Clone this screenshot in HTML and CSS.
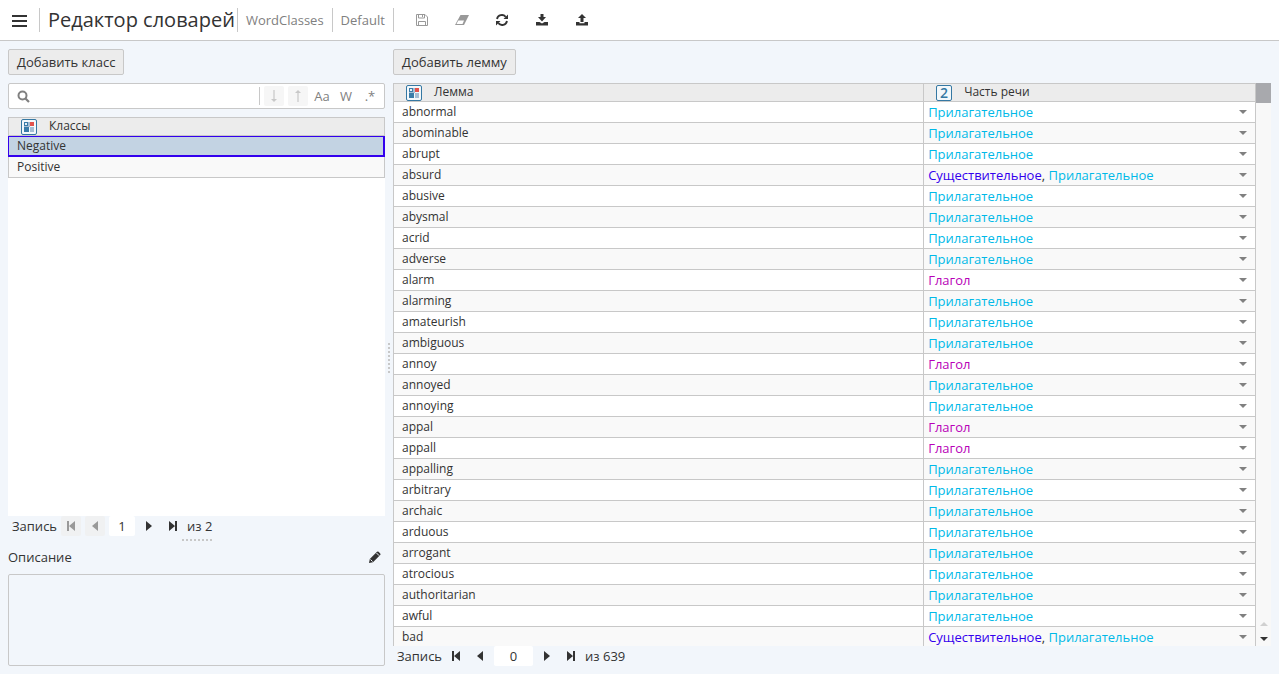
FILE: index.html
```html
<!DOCTYPE html>
<html lang="ru">
<head>
<meta charset="utf-8">
<title>Редактор словарей</title>
<link rel="stylesheet" href="styles.css">
</head>
<body>
<svg class="sprite" aria-hidden="true">
  <symbol id="classes" viewBox="0 0 16 16"><rect x=".5" y=".5" width="15" height="15" rx="1.5" fill="#f3f8fb" stroke="#3578a3"/><path d="M3 3h4v4H3z" fill="#3a7ca8"/><path d="M4 4h2v2H4z" fill="#e6f0f6"/><path d="M7 3h2v5H3V7h4z" fill="#a5bdd3"/><path d="M9 3h4v4H9z" fill="#e2524c"/><path d="M3 8h5v5H3z" fill="#3a7ca8"/><path d="M9 8h4v5H9z" fill="#a5bdd3"/></symbol>
  <symbol id="caret" viewBox="0 0 8 4"><path d="M0 0h8L4 4z"/></symbol>
  <symbol id="first" viewBox="0 0 10 10"><path d="M1 0h2v10H1zM9 0v10L3 5z"/></symbol>
  <symbol id="prev" viewBox="0 0 10 10"><path d="M8 0v10L2 5z"/></symbol>
  <symbol id="next" viewBox="0 0 10 10"><path d="M2 0v10l6-5z"/></symbol>
  <symbol id="last" viewBox="0 0 10 10"><path d="M7 0h2v10H7zM1 0v10l6-5z"/></symbol>
</svg>
<header class="topbar">
  <button class="menu" aria-label="Меню"><svg width="16" height="12" viewBox="0 0 16 12"><path d="M0 0h15v2H0zM0 5h15v2H0zM0 10h15v2H0z"/></svg></button>
  <h1 class="title">Редактор словарей</h1>
  <a class="crumb" href="#">WordClasses</a>
  <a class="crumb" href="#">Default</a>
  <nav class="tools" aria-label="Действия">
    <button class="tool" disabled aria-label="Сохранить"><svg class="line" width="12" height="12" viewBox="0 0 12 12"><path d="M.5.5h8.500l2.500 2.500v8.500H.5zM2.500.5v3.500h6V.5M2.500 11.500v-4h7v4M6.500 1v2"/></svg></button>
    <button class="tool" disabled aria-label="Очистить"><svg width="14" height="10" viewBox="0 0 14 10"><path d="M5.500 0H14L9 10H0z"/><path d="M3.300 5.500H9L7.500 9H1.500z" fill="#fff"/></svg></button>
    <button class="tool" aria-label="Обновить"><svg width="12" height="12" viewBox="0 0 12 12"><path d="M1 5a5 5 0 0 1 8.700-2.200M11 7a5 5 0 0 1-8.700 2.200" fill="none" stroke="currentColor" stroke-width="1.800"/><path d="M12 .5V5H7.500zM0 11.500V7h4.500z"/></svg></button>
    <button class="tool" aria-label="Импорт"><svg width="12" height="12" viewBox="0 0 12 12"><path d="M4.500 0h3v3H10L6 7.500 2 3h2.500zM0 8h3.500L6 9.500 8.500 8H12v3.500H0z"/></svg></button>
    <button class="tool" aria-label="Экспорт"><svg width="12" height="12" viewBox="0 0 12 12"><path d="M6 0l4 4H7.500v4h-3V4H2zM0 8h3.500v1.200h5V8H12v3.500H0z"/></svg></button>
  </nav>
</header>
<main class="workspace">
  <section class="pane pane-classes">
    <button class="add">Добавить класс</button>
    <div class="search">
      <svg class="lens" width="13" height="13" viewBox="0 0 13 13"><circle cx="5.500" cy="5.500" r="4" fill="none" stroke="currentColor" stroke-width="2"/><path d="M8.500 8.500l3.500 3.500" stroke="currentColor" stroke-width="2.200"/></svg>
      <input class="query" type="text" aria-label="Поиск">
      <span class="divider"></span>
      <button class="opt" disabled aria-label="Следующее"><svg width="6" height="12" viewBox="0 0 6 12"><path d="M2 0h2v9H2z" opacity=".6"/><path d="M0 9h6l-3 3z"/></svg></button>
      <button class="opt" disabled aria-label="Предыдущее"><svg width="6" height="12" viewBox="0 0 6 12"><path d="M2 3h2v9H2z" opacity=".6"/><path d="M0 3h6L3 0z"/></svg></button>
      <button class="opt">Aa</button>
      <button class="opt">W</button>
      <button class="opt">.*</button>
    </div>
    <div class="list">
      <table class="grid classes">
        <thead><tr><th><span class="head"><svg class="kind"><use href="#classes"/></svg>Классы</span></th></tr></thead>
        <tbody><tr class="selected"><td>Negative</td></tr><tr><td>Positive</td></tr></tbody>
      </table>
    </div>
    <div class="pager">
      <label for="class-no">Запись</label>
      <button class="step" disabled aria-label="Первая"><svg><use href="#first"/></svg></button>
      <button class="step" disabled aria-label="Предыдущая"><svg><use href="#prev"/></svg></button>
      <input class="number" id="class-no" value="1">
      <button class="step" aria-label="Следующая"><svg><use href="#next"/></svg></button>
      <button class="step" aria-label="Последняя"><svg><use href="#last"/></svg></button>
      <span class="total">из 2</span>
    </div>
    <div class="splitter-row"></div>
    <div class="caption">
      <label for="about">Описание</label>
      <button class="edit" aria-label="Изменить"><svg width="12" height="12" viewBox="0 0 12 12"><path d="M0 12l.8-4L8 .8Q8.800 0 9.600.8l1.600 1.600Q12 3.200 11.200 4L4 11.200z"/><path d="M1.500 8.500l2 2M7.500 2l2.700 2.700" stroke="#f2f6fb"/></svg></button>
    </div>
    <textarea class="about" id="about" readonly></textarea>
  </section>
  <div class="splitter"></div>
  <section class="pane pane-lemmas">
    <button class="add">Добавить лемму</button>
    <div class="sheet">
      <div class="viewport">
        <table class="grid lemmas">
          <colgroup><col class="col-lemma"><col></colgroup>
          <thead><tr><th><span class="head"><svg class="kind"><use href="#classes"/></svg>Лемма</span></th><th><span class="head"><span class="kind enum">2</span>Часть речи</span></th></tr></thead>
          <tbody>
            <tr><td>abnormal</td><td><button class="pos"><span class="adj">Прилагательное</span><svg><use href="#caret"/></svg></button></td></tr>
            <tr><td>abominable</td><td><button class="pos"><span class="adj">Прилагательное</span><svg><use href="#caret"/></svg></button></td></tr>
            <tr><td>abrupt</td><td><button class="pos"><span class="adj">Прилагательное</span><svg><use href="#caret"/></svg></button></td></tr>
            <tr><td>absurd</td><td><button class="pos"><span><span class="noun">Существительное</span>, <span class="adj">Прилагательное</span></span><svg><use href="#caret"/></svg></button></td></tr>
            <tr><td>abusive</td><td><button class="pos"><span class="adj">Прилагательное</span><svg><use href="#caret"/></svg></button></td></tr>
            <tr><td>abysmal</td><td><button class="pos"><span class="adj">Прилагательное</span><svg><use href="#caret"/></svg></button></td></tr>
            <tr><td>acrid</td><td><button class="pos"><span class="adj">Прилагательное</span><svg><use href="#caret"/></svg></button></td></tr>
            <tr><td>adverse</td><td><button class="pos"><span class="adj">Прилагательное</span><svg><use href="#caret"/></svg></button></td></tr>
            <tr><td>alarm</td><td><button class="pos"><span class="verb">Глагол</span><svg><use href="#caret"/></svg></button></td></tr>
            <tr><td>alarming</td><td><button class="pos"><span class="adj">Прилагательное</span><svg><use href="#caret"/></svg></button></td></tr>
            <tr><td>amateurish</td><td><button class="pos"><span class="adj">Прилагательное</span><svg><use href="#caret"/></svg></button></td></tr>
            <tr><td>ambiguous</td><td><button class="pos"><span class="adj">Прилагательное</span><svg><use href="#caret"/></svg></button></td></tr>
            <tr><td>annoy</td><td><button class="pos"><span class="verb">Глагол</span><svg><use href="#caret"/></svg></button></td></tr>
            <tr><td>annoyed</td><td><button class="pos"><span class="adj">Прилагательное</span><svg><use href="#caret"/></svg></button></td></tr>
            <tr><td>annoying</td><td><button class="pos"><span class="adj">Прилагательное</span><svg><use href="#caret"/></svg></button></td></tr>
            <tr><td>appal</td><td><button class="pos"><span class="verb">Глагол</span><svg><use href="#caret"/></svg></button></td></tr>
            <tr><td>appall</td><td><button class="pos"><span class="verb">Глагол</span><svg><use href="#caret"/></svg></button></td></tr>
            <tr><td>appalling</td><td><button class="pos"><span class="adj">Прилагательное</span><svg><use href="#caret"/></svg></button></td></tr>
            <tr><td>arbitrary</td><td><button class="pos"><span class="adj">Прилагательное</span><svg><use href="#caret"/></svg></button></td></tr>
            <tr><td>archaic</td><td><button class="pos"><span class="adj">Прилагательное</span><svg><use href="#caret"/></svg></button></td></tr>
            <tr><td>arduous</td><td><button class="pos"><span class="adj">Прилагательное</span><svg><use href="#caret"/></svg></button></td></tr>
            <tr><td>arrogant</td><td><button class="pos"><span class="adj">Прилагательное</span><svg><use href="#caret"/></svg></button></td></tr>
            <tr><td>atrocious</td><td><button class="pos"><span class="adj">Прилагательное</span><svg><use href="#caret"/></svg></button></td></tr>
            <tr><td>authoritarian</td><td><button class="pos"><span class="adj">Прилагательное</span><svg><use href="#caret"/></svg></button></td></tr>
            <tr><td>awful</td><td><button class="pos"><span class="adj">Прилагательное</span><svg><use href="#caret"/></svg></button></td></tr>
            <tr><td>bad</td><td><button class="pos"><span><span class="noun">Существительное</span>, <span class="adj">Прилагательное</span></span><svg><use href="#caret"/></svg></button></td></tr>
          </tbody>
        </table>
      </div>
      <div class="scrollbar">
        <div class="thumb"></div>
        <button class="arrow up" disabled aria-label="Вверх"><svg><use href="#caret"/></svg></button>
        <button class="arrow" aria-label="Вниз"><svg><use href="#caret"/></svg></button>
      </div>
    </div>
    <div class="pager">
      <label for="lemma-no">Запись</label>
      <button class="step" aria-label="Первая"><svg><use href="#first"/></svg></button>
      <button class="step" aria-label="Предыдущая"><svg><use href="#prev"/></svg></button>
      <input class="number wide" id="lemma-no" value="0">
      <button class="step" aria-label="Следующая"><svg><use href="#next"/></svg></button>
      <button class="step" aria-label="Последняя"><svg><use href="#last"/></svg></button>
      <span class="total">из 639</span>
    </div>
  </section>
</main>
</body>
</html>
```
FILE: styles.css
```css
* { box-sizing: border-box; }
body {
  margin: 0;
  height: 100vh;
  display: flex;
  flex-direction: column;
  overflow: hidden;
  background: #f2f6fb;
  color: #333;
  font: 13px/20px "Open Sans", sans-serif;
}
button, input, textarea { font: inherit; color: inherit; }
button { margin: 0; padding: 0; border: 0; background: none; }
svg { display: block; flex: none; fill: currentColor; }
.line { fill: none; stroke: currentColor; }
.sprite { position: absolute; width: 0; height: 0; }

.topbar {
  flex: none;
  height: 41px;
  display: flex;
  align-items: center;
  background: #fff;
  border-bottom: 1px solid #c8c8c8;
}
.menu { height: 24px; padding: 2px 11px 0 12px; border-right: 1px solid #c8c8c8; }
.title { margin: 0; padding: 0 2px 0 8px; font-size: 20px; line-height: 24px; font-weight: 400; border-right: 1px solid #c8c8c8; }
.crumb { height: 24px; line-height: 24px; padding: 0 8px; color: #808080; text-decoration: none; border-right: 1px solid #c8c8c8; }
.tools { display: flex; padding-left: 8px; }
.tool { width: 40px; height: 24px; display: flex; align-items: center; justify-content: center; }
.tool:disabled { color: #999; }

.workspace { flex: 1; min-height: 0; display: flex; padding: 8px; }
.pane { display: flex; flex-direction: column; min-width: 0; }
.pane-classes { flex: 0 0 377px; }
.pane-lemmas { flex: 1; }
.splitter { flex: none; width: 8px; display: flex; align-items: center; justify-content: center; }
.splitter::before { content: ""; width: 2px; height: 30px; background: repeating-linear-gradient(#c8c8c8 0 2px, transparent 2px 4px); }
.add {
  flex: none;
  align-self: flex-start;
  height: 26px;
  padding: 0 8px;
  margin-bottom: 8px;
  border: 1px solid #c8c8c8;
  border-radius: 2px;
  background: #ececec;
}

.search { flex: none; height: 26px; display: flex; align-items: center; gap: 4px; padding: 0 4px 0 8px; margin-bottom: 8px; border: 1px solid #c8c8c8; border-radius: 2px; background: #fff; }
.lens { color: #808080; }
.query { flex: 1; min-width: 0; height: 20px; border: 0; outline: 0; background: none; }
.divider { width: 1px; height: 18px; background: #c8c8c8; }
.opt { width: 20px; height: 20px; display: flex; align-items: center; justify-content: center; color: #808080; border-radius: 2px; }
.opt:disabled { background: #f6f6f6; color: #c8c8c8; }

.list { flex: 1; min-height: 0; background: #fff; overflow: hidden; }
.grid { width: 100%; border-collapse: separate; border-spacing: 0; table-layout: fixed; border-top: 1px solid #c8c8c8; border-left: 1px solid #c8c8c8; font-size: 12px; }
.grid th, .grid td { padding: 0; border-right: 1px solid #c8c8c8; border-bottom: 1px solid #c8c8c8; text-align: left; font-weight: 400; }
.grid th { height: 18px; background: #ececec; }
.grid td { height: 21px; line-height: 20px; padding: 0 8px; background: #fff; }
.grid tr:nth-child(even) td { background: #f9f9f9; }
.head { display: flex; gap: 12px; height: 17px; line-height: 16px; padding-left: 12px; }
.kind { width: 16px; height: 16px; margin-top: 1px; flex: none; }
.enum { border: 1px solid #3578a3; border-radius: 2px; background: #f3f8fb; color: #3578a3; font-size: 14px; font-weight: 600; line-height: 14px; text-align: center; }
.grid .selected td { position: relative; background: #c3d3e3; }
.selected td::after { content: ""; position: absolute; inset: 0 -1px -1px; border: solid #3300ee; border-width: 1px 2px 2px 1px; }
.grid.lemmas td:last-child { padding: 0 8px 0 4px; }
.col-lemma { width: 61.5%; }
.pos { width: 100%; height: 20px; display: flex; align-items: center; justify-content: space-between; font-size: 13px; line-height: 20px; white-space: nowrap; }
.pos svg { width: 8px; height: 4px; color: #808080; }
.adj { color: #00b9e8; }
.noun { color: #3300ee; }
.verb { color: #b800b8; }

.sheet { flex: 1; min-height: 0; display: flex; }
.viewport { flex: 1; overflow: hidden; }
.scrollbar { flex: none; width: 15px; display: flex; flex-direction: column; background: #f8f8f8; }
.thumb { height: 20px; margin-bottom: auto; background: #a8a9ad; }
.arrow { height: 15px; display: flex; align-items: center; justify-content: center; }
.arrow svg { width: 8px; height: 4px; }
.up { color: #d0d0d0; }
.up svg { transform: rotate(180deg); }

.pager { flex: none; height: 20px; display: flex; gap: 4px; padding-left: 4px; }
.step { width: 20px; height: 20px; display: flex; align-items: center; justify-content: center; border-radius: 2px; }
.step svg { width: 10px; height: 10px; }
.step:disabled { background: #f0f1f2; color: #999; }
.number { width: 26px; height: 20px; padding: 0; border: 0; border-radius: 2px; background: #fff; text-align: center; }
.number.wide { width: 39px; }
.splitter-row { flex: none; width: 30px; height: 2px; margin: 3px auto 6px; background: repeating-linear-gradient(90deg, #c8c8c8 0 2px, transparent 2px 4px); }
.caption { flex: none; display: flex; align-items: center; justify-content: space-between; padding-right: 4px; margin-bottom: 7px; }
.about { flex: none; display: block; width: 100%; height: 92px; resize: none; border: 1px solid #c8c8c8; border-radius: 2px; background: transparent; outline: 0; }
```
